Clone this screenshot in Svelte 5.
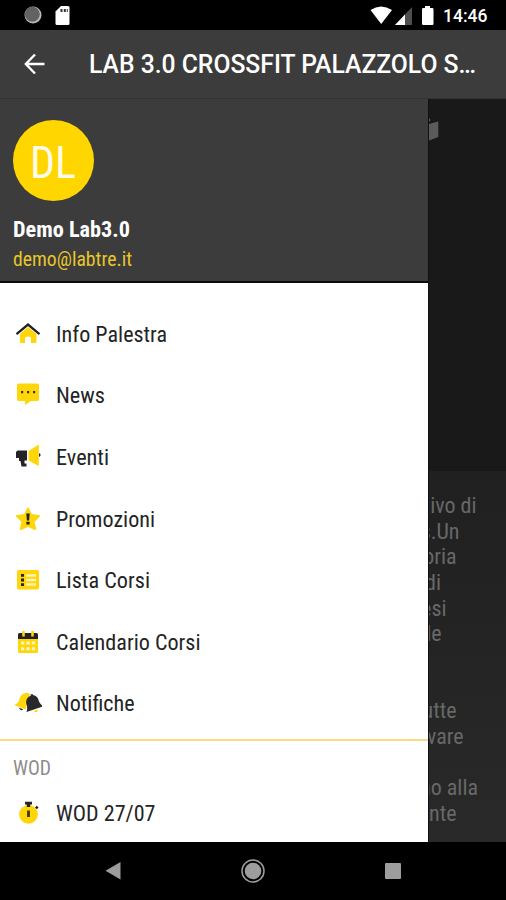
<script>
  const items = [
    { icon: 'home', label: 'Info Palestra', w: 111 },
    { icon: 'chat', label: 'News', w: 49 },
    { icon: 'horn', label: 'Eventi', w: 53 },
    { icon: 'star', label: 'Promozioni', w: 99 },
    { icon: 'list', label: 'Lista Corsi', w: 94 },
    { icon: 'calendar', label: 'Calendario Corsi', w: 144.5 },
    { icon: 'bells', label: 'Notifiche', w: 78.5 }
  ];
  const lines = [
    ['ivo di', 29.5], ['s.Un', 46.5], ['oria', 49.5], ['di', 65], ['esi', 59.5], ['le', 64.5],
    ['', 0], ['', 0], ['utte', 49.5], ['vare', 42.5], ['', 0], ['no alla', 28], ['nte', 49.5]
  ];
</script>

{#snippet icon(name)}
  <svg class="icon" width="28" height="28" viewBox="0 0 28 28">
    {#if name === 'home'}
      <path d="M14 7 22.500 14V21.500Q22.500 23 21 23H17V18.500Q17 16.500 14 16.500T11 18.500V23H7.500Q6 23 6 21.500V14Z" fill="#ffd60a" />
      <path d="M2.500 14.200 14 4.500 25.500 14.200" fill="none" stroke="#222326" stroke-width="2.300" />
    {:else if name === 'chat'}
      <path d="M4.500 2.500H23.500Q25 2.500 25 4V18.500Q25 20 23.500 20H17L11 24V20H4.500Q3 20 3 18.500V4Q3 2.500 4.500 2.500Z" fill="#ffd60a" />
      <path d="M7 10h2.200v2.200H7zM13 10h2.200v2.200H13zM19 10h2.200v2.200H19z" fill="#3b3514" />
    {:else if name === 'horn'}
      <path d="M24.800 1.500V23L14.500 17.500V8Z" fill="#ffd60a" />
      <path d="M3.500 7.500H13V17.500H10.500V20.500H12.500V23.500H7.500L6.500 18H5V15H2V9Z" fill="#242426" />
      <path d="M25 10q3.300 2 0 4z" fill="#242426" />
    {:else if name === 'star'}
      <path d="M14 3.500 17 10 25 11 19.500 16.600 21.200 24 14 20.800 6.800 24 8.500 16.600 3 11 11 10Z" fill="#ffd60a" stroke="#ffd60a" stroke-width="2" stroke-linejoin="round" />
      <path d="M12.300 8.500h3.400l-.6 7h-2.200zM12.400 16.800h3.200v2.700h-3.200z" fill="#222" />
    {:else if name === 'list'}
      <rect x="3" y="4" width="22" height="19.500" rx="1.800" fill="#ffd60a" />
      <path d="M12 9.500h10M12 14h10M12 18.500h10" stroke="#fff4ad" stroke-width="2.700" />
      <path d="M7 8h3v2.800H7zM7 12.600h3v2.800H7zM7 17.200h3V20H7z" fill="#292619" />
    {:else if name === 'calendar'}
      <path d="M4 11H24V23.500Q24 25 22.500 25H5.500Q4 25 4 23.500Z" fill="#ffd60a" />
      <path d="M4 11V6.500Q4 5 5.500 5H22.500Q24 5 24 6.500V11Z" fill="#222326" />
      <path d="M9.500 3v5.500M18.500 3v5.500" stroke="#ffd60a" stroke-width="2.600" />
      <path d="M7 13.500h3.300v3H7zM12.400 13.500h3.300v3h-3.300zM17.800 13.500h3.300v3h-3.300zM7 19.300h3.300v3H7zM12.400 19.300h3.300v3h-3.300zM17.800 19.300h3.300v3h-3.300z" fill="#fff6bd" />
    {:else if name === 'bells'}
      <path d="M12 4Q6 5 5.200 11 4.500 14 .2 16L11.500 20.500 16 5.500Q14.500 3 12 4Z" fill="#ffd60a" />
      <path d="m4.500 18.500 4.500 1.700q-1.500 2.800-4.500-1.700z" fill="#29292b" />
      <path d="M16.500 5.500 18.500 5 19 6Q24 7 24.800 12 25.500 14.500 29 17.500L12.500 23Q14 18.500 12.200 14.500 11.500 8.500 16.800 6.700Z" fill="#29292b" />
      <path d="m19.500 22 4.500-1.600q-.5 4.400-4.500 1.600z" fill="#ffd60a" />
    {:else}
      <circle cx="14.500" cy="15.300" r="9.400" fill="#ffd60a" />
      <path d="M11 2.800h7v2.700h-1.800v2.500h-3.400v-2.500h-1.800zM21 8.500l1.800-1.800 1.800 1.800-1.800 1.800z" fill="#242426" />
      <path d="M13.100 11.500h2.800V18h-2.800z" fill="#403817" />
    {/if}
  </svg>
{/snippet}

{#snippet label(text, w, size = 22.6)}
  <svg class="label" width={w + 2} height="30">
    <text x="0" y="22.600" font-size={size} textLength={w} lengthAdjust="spacingAndGlyphs">{text}</text>
  </svg>
{/snippet}

<div class="screen">
  <div class="status">
    <svg width="50" height="22" viewBox="0 0 50 22">
      <circle cx="9" cy="11" r="8.500" fill="#bbb" />
      <circle cx="8.300" cy="10.300" r="7.500" fill="#626262" />
      <path d="M37 2H44Q45.500 2 45.500 3.500V19.500Q45.500 21 44 21H33Q31.500 21 31.500 19.500V7.500Z" fill="#fff" />
      <path d="M36.500 5h2v3h-2zM39.800 5h2v3h-2zM42.800 5h1v3h-1z" fill="#333" />
    </svg>
    <div class="right">
      <svg width="66" height="22" viewBox="0 0 66 22">
        <path d="M.500 6Q11 -1 22 6L11.200 20Z" fill="#fff" />
        <path d="M42 3V21H25Z" fill="#4e4e4e" />
        <path d="M35 10.500V21H25Z" fill="#fff" />
        <path d="M55 2h5v2h2.200q1.300 0 1.300 1.300V19.700Q63.500 21 62.200 21H53.300Q52 21 52 19.700V5.300Q52 4 53.300 4H55Z" fill="#fff" />
      </svg>
      <span class="clock">14:46</span>
    </div>
  </div>

  <header>
    <svg width="22" height="22" viewBox="0 0 22 22">
      <path d="M20.500 11H2M11 1.500 1.800 11 11 20.500" fill="none" stroke="#fff" stroke-width="2.400" />
    </svg>
    <h1>
      <svg width="390" height="34"><text x="0" y="26.200" font-size="25" textLength="387" lengthAdjust="spacingAndGlyphs">LAB 3.0 CROSSFIT PALAZZOLO S…</text></svg>
    </h1>
  </header>

  <main>
    <aside>
      <div class="profile">
        <div class="avatar"><svg class="label" width="48" height="54"><text x="1" y="43.500" font-size="44.500" textLength="46" lengthAdjust="spacingAndGlyphs">DL</text></svg></div>
        <div class="name">{@render label('Demo Lab3.0', 117, 22.8)}</div>
        <div class="mail">{@render label('demo@labtre.it', 119, 20.8)}</div>
      </div>
      <nav>
        {#each items as item}
          <div class="item">{@render icon(item.icon)}{@render label(item.label, item.w)}</div>
        {/each}
      </nav>
      <section>
        <div class="group">{@render label('WOD', 38, 19.8)}</div>
        <div class="item last">{@render icon('watch')}{@render label('WOD 27/07', 99.5)}</div>
      </section>
    </aside>
    <article>
      <div class="photo">
        <svg width="12" height="24" viewBox="0 0 12 24"><path d="M0 6 9.300 3.500V19L0 22.500ZM0 0 1.500 2 0 4Z" fill="#5b5b5b" /></svg>
      </div>
      <div class="copy">
        {#each lines as [text, inset]}
          <div class="line" style="padding-right: {inset}px"><span>{text}</span></div>
        {/each}
      </div>
    </article>
  </main>

  <footer>
    <svg width="16" height="18" viewBox="0 0 16 18"><path d="M15.500 0V17.500L.500 8.800Z" fill="#9d9d9d" /></svg>
    <svg width="24" height="24" viewBox="0 0 24 24"><circle cx="12" cy="12" r="11" fill="none" stroke="#9d9d9d" stroke-width="1.500" /><circle cx="12" cy="12" r="8.300" fill="#9d9d9d" /></svg>
    <svg width="16" height="16"><rect width="16" height="16" rx="1" fill="#9d9d9d" /></svg>
  </footer>
</div>

<style>
  .screen {
    width: 506px;
    height: 900px;
    display: flex;
    flex-direction: column;
    overflow: hidden;
    background: #000;
    font-family: "Roboto Condensed", Roboto, sans-serif;
  }
  svg { display: block; flex: none; }
  .status {
    height: 30px;
    padding: 4px 19px 4px 24px;
    box-sizing: border-box;
    display: flex;
    justify-content: space-between;
    color: #fff;
  }
  .right { display: flex; gap: 7px; }
  .clock { width: 44px; font: 500 17.5px/24px Roboto, sans-serif; white-space: nowrap; }
  header {
    height: 69px;
    box-sizing: border-box;
    border-bottom: 1px solid #333;
    padding-left: 24px;
    display: flex;
    align-items: center;
    gap: 43px;
    background: #3c3c3c;
  }
  h1 { margin: 0; font-family: Roboto, sans-serif; font-weight: 500; fill: #fff; }
  main { height: 743px; display: flex; }
  aside {
    width: 428px;
    flex: none;
    background: #fff;
    overflow: hidden;
    border-right: 1px solid #111;
    box-sizing: content-box;
  }
  .profile {
    height: 184px;
    box-sizing: border-box;
    padding: 21px 12px 0;
    background: #3c3c3c;
    border-bottom: 2px solid #0b0b0b;
  }
  .avatar {
    width: 81px;
    height: 81px;
    margin-left: .5px;
    border-radius: 50%;
    display: flex;
    align-items: center;
    justify-content: center;
    background: #ffd600;
    fill: #fffbe6;
  }
  .name { padding: 13px 0 0 1px; font-weight: 700; fill: #fff; }
  .mail { margin-top: -1px; padding-left: 1px; fill: #e8c62c; }
  .label { overflow: visible; }
  nav { padding: 20px 0 5px; border-bottom: 2px solid #fbdb85; }
  .item {
    height: 61.6px;
    padding-left: 14px;
    display: flex;
    align-items: center;
    gap: 14px;
    fill: #242424;
  }
  .item.last { height: 61px; }
  .group { padding: 11px 0 0 12.5px; fill: #8d8d8d; }
  article { flex: 1; min-width: 0; overflow: hidden; background: #252525; }
  .photo {
    height: 372px;
    box-sizing: border-box;
    padding-top: 19px;
    background: #191919;
  }
  .copy {
    height: 371px;
    box-sizing: border-box;
    padding-top: 22px;
    background: linear-gradient(#202020, #292929);
    color: #686868;
  }
  .line {
    height: 25.65px;
    display: flex;
    justify-content: flex-end;
    font-size: 22px;
    line-height: 25.65px;
    white-space: nowrap;
  }
  .line span { flex: none; }
  footer {
    height: 58px;
    padding: 0 105px;
    display: flex;
    align-items: center;
    justify-content: space-between;
  }
</style>
